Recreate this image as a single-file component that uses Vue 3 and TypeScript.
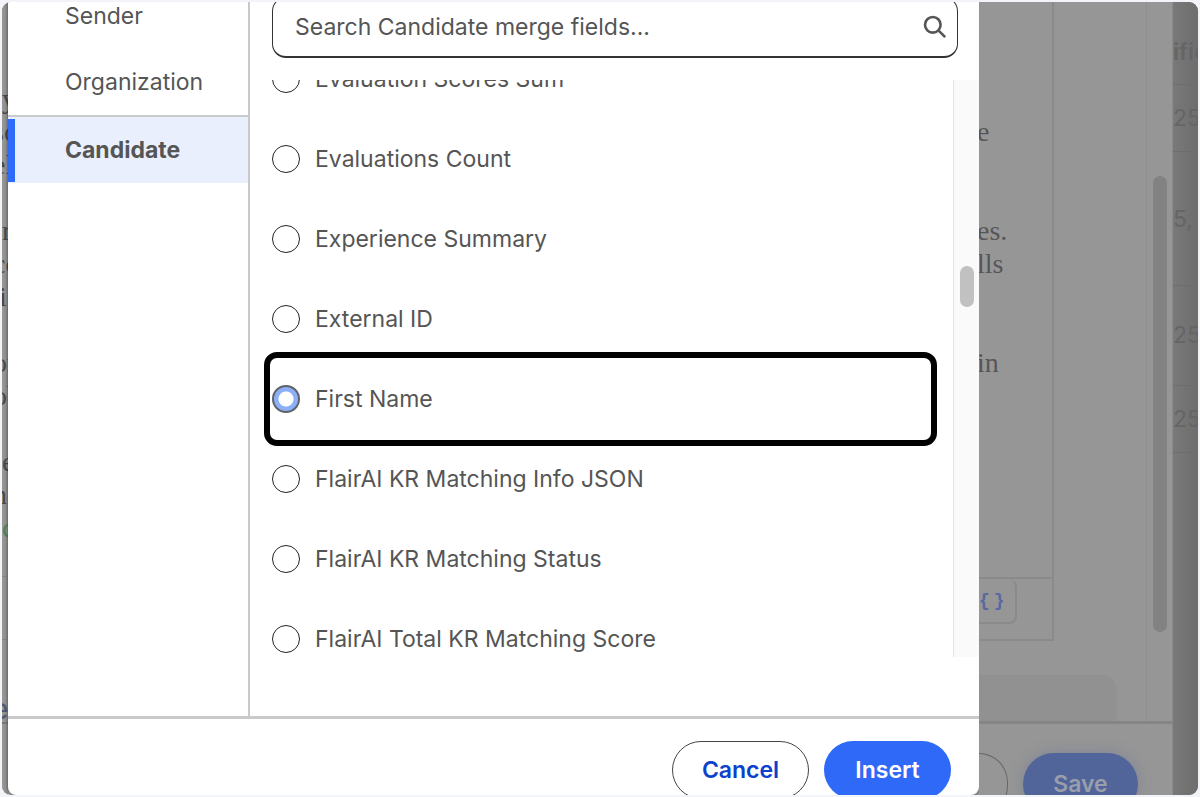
<script setup lang="ts">
import { ref } from 'vue'

const groups = ['Sender', 'Organization', 'Candidate']
const activeGroup = ref('Candidate')

const fields = [
  'Evaluation Scores Sum',
  'Evaluations Count',
  'Experience Summary',
  'External ID',
  'First Name',
  'FlairAI KR Matching Info JSON',
  'FlairAI KR Matching Status',
  'FlairAI Total KR Matching Score',
]
const selected = ref('First Name')
const query = ref('')

const leftLines = ['y', 'sc', 'el', '', 'r', 'cc', 'i,', '', 'or', 'ob', '', 'e', 'nc', 'c']
const rightLines = ['', 'e', '', '', 'es.', 'lls', '', '', 'in']
const rows = ['ific', '25,', '5,', '25,', '25,']
</script>

<template>
  <div class="page">
    <div class="frame">
      <div class="behind-left" aria-hidden="true">
        <div class="letter">
          <p
            v-for="(line, i) in leftLines"
            :key="i"
            :class="{ green: i === 13, cut: line.length > 1 && line !== 'i,', narrow: line === 'i,' }"
          >{{ line }}</p>
        </div>
        <div class="left-tools"></div>
        <div class="left-link">e</div>
      </div>

      <section class="modal" role="dialog" aria-label="Insert merge field">
        <div class="body">
          <nav class="groups">
            <button
              v-for="g in groups"
              :key="g"
              type="button"
              class="group"
              :class="{ active: g === activeGroup }"
              @click="activeGroup = g"
            >{{ g }}</button>
          </nav>
          <div class="content">
            <div class="search">
              <input v-model="query" type="text" aria-label="Search Candidate merge fields" placeholder="Search Candidate merge fields..." />
              <svg class="glass" viewBox="0 0 24 24" aria-hidden="true">
                <circle cx="9.8" cy="9.8" r="7.8" />
                <path d="M15.4 15.4L22.2 22.2" />
              </svg>
            </div>
            <div class="scroller">
              <div class="list">
                <label v-for="f in fields" :key="f" class="field" :class="{ framed: f === 'First Name' }">
                  <input v-model="selected" type="radio" name="field" :value="f" />
                  <span>{{ f }}</span>
                </label>
              </div>
              <div class="track"><div class="thumb"></div></div>
            </div>
          </div>
        </div>
        <footer class="footer">
          <button type="button" class="btn cancel">Cancel</button>
          <button type="button" class="btn insert">Insert</button>
        </footer>
      </section>

      <div class="behind-right">
        <div class="dialog">
          <div class="upper">
            <div class="main">
              <div class="editor">
                <div class="text">
                  <p v-for="(line, i) in rightLines" :key="i">{{ line }}</p>
                </div>
                <div class="tools"><button type="button" class="braces"><span>{</span><span>}</span></button></div>
              </div>
              <div class="panel"></div>
            </div>
            <div class="outer-track"><div class="outer-thumb"></div></div>
          </div>
          <div class="outer-footer">
            <span class="outer-cancel"></span>
            <button type="button" class="save">Save</button>
          </div>
        </div>
        <div class="table-edge">
          <span v-for="(r, i) in rows" :key="i" :class="'r' + i">{{ r }}</span>
        </div>
      </div>
    </div>
  </div>
</template>

<style>
body {
  background: #f3f3fa;
}
</style>

<style scoped>
* {
  box-sizing: border-box;
}
.page {
  height: 100vh;
  padding: 2px;
  background: #f3f3fa;
  font-family: Inter, "Liberation Sans", sans-serif;
  font-size: 23px;
  color: #555;
}
button,
input {
  font: inherit;
  color: inherit;
  margin: 0;
}
p {
  margin: 0;
}
.frame {
  display: flex;
  height: 100%;
  border-radius: 9px;
  overflow: hidden;
  background: #969696;
}
.behind-left {
  flex: none;
  width: 6px;
  overflow: hidden;
  background: linear-gradient(90deg, #9a9a99, #868686);
  font-family: "Liberation Serif", serif;
  font-size: 28px;
  color: #484848;
}
.letter {
  height: 575px;
  padding-top: 80px;
  border-bottom: 1px solid #858585;
}
.letter p {
  height: 33px;
  line-height: 33px;
  white-space: nowrap;
}
.letter p.cut {
  text-indent: -9px;
}
.letter p.narrow {
  text-indent: -3px;
}
.letter p.green {
  color: #4c8358;
}
.left-tools {
  height: 63px;
  border-bottom: 1px solid #858585;
}
.left-link {
  height: 84px;
  padding-top: 54px;
  line-height: 30px;
  font-family: Inter, sans-serif;
  text-indent: -10px;
  color: #4e5870;
  border-bottom: 2px solid #777;
}
.modal {
  flex: 1;
  min-width: 0;
  display: flex;
  flex-direction: column;
  background: #fff;
  border-radius: 0 0 8px 8px;
  box-shadow: 0 0 3px rgba(0, 0, 0, 0.5);
  overflow: hidden;
}
.body {
  flex: 1;
  min-height: 0;
  display: flex;
}
.groups {
  flex: none;
  width: 242px;
  border-right: 2px solid #c9c9c9;
  overflow: hidden;
  padding-top: 46px;
}
.group {
  display: block;
  width: 100%;
  height: 66px;
  padding: 0 0 0 57px;
  border: 0;
  background: #fff;
  text-align: left;
}
.group:first-child {
  margin-top: -65px;
}
.group.active {
  height: 68px;
  border-top: 2px solid #c9c9c9;
  background: linear-gradient(#2e6bf9, #2e6bf9) 0 2px / 7px 63px no-repeat, #e9effc;
  font-weight: 700;
}
.content {
  flex: 1;
  min-width: 0;
  display: flex;
  flex-direction: column;
  padding-bottom: 59px;
}
.search {
  display: flex;
  align-items: center;
  height: 61px;
  margin: -5px 21px 22px 22px;
  padding: 0 10px 0 22px;
  border: 1px solid #333;
  border-bottom-width: 2px;
  border-radius: 14px;
}
.search input {
  flex: 1;
  min-width: 0;
  padding: 0;
  border: 0;
  outline: 0;
  background: none;
}
.search input::placeholder {
  color: #555;
  opacity: 1;
}
.glass {
  width: 24px;
  height: 24px;
  fill: none;
  stroke: #555;
  stroke-width: 2.6;
}
.scroller {
  flex: 1;
  min-height: 0;
  display: flex;
  overflow: hidden;
}
.list {
  flex: 1;
  margin-top: -41px;
  padding: 0 16px 0 14px;
}
.field {
  position: relative;
  display: flex;
  align-items: center;
  gap: 15px;
  height: 80px;
  padding-left: 8px;
}
.framed::after {
  content: "";
  position: absolute;
  inset: -7px 0;
  border: 6px solid #000;
  border-radius: 13px;
}
.field input {
  appearance: none;
  flex: none;
  width: 28px;
  height: 28px;
  border: 1px solid #222;
  border-radius: 50%;
  background: #fff;
}
.field input:checked {
  border: 2px solid #5f6368;
  background: radial-gradient(circle, #fff 7px, #8cb0f8 8px);
}
.track {
  flex: none;
  width: 26px;
  padding: 186px 5px 0 6px;
  background: #fafafa;
  border-left: 1px solid #e4e4e4;
}
.thumb {
  height: 41px;
  border-radius: 7px;
  background: #c1c1c1;
}
.footer {
  flex: none;
  display: flex;
  justify-content: flex-end;
  gap: 15px;
  height: 79px;
  padding: 22px 28px 0 0;
  border-top: 3px solid #c9c9c9;
  overflow: hidden;
}
.btn {
  height: 58px;
  border-radius: 29px;
  padding: 0;
  font-weight: 600;
}
.cancel {
  width: 137px;
  border: 1px solid #444;
  background: #fff;
  color: #0b41cc;
}
.insert {
  width: 127px;
  border: 0;
  background: #2e69f8;
  color: #fff;
}
.behind-right {
  flex: none;
  width: 219px;
  display: flex;
}
.dialog {
  width: 194px;
  display: flex;
  flex-direction: column;
  border-right: 1px solid #8b8b8b;
  background: #969696;
}
.upper {
  flex: 1;
  min-height: 0;
  display: flex;
}
.main {
  flex: 1;
  display: flex;
  flex-direction: column;
}
.editor {
  width: 75px;
  height: 639px;
  display: flex;
  flex-direction: column;
  border-right: 2px solid #8a8a8a;
  border-bottom: 2px solid #8a8a8a;
}
.text {
  flex: 1;
  padding-top: 80px;
  font-family: "Liberation Serif", serif;
  font-size: 28px;
  color: #565656;
  overflow: hidden;
}
.text p {
  height: 33px;
  line-height: 33px;
  text-indent: -2px;
}
.tools {
  height: 62px;
  border-top: 2px solid #8a8a8a;
}
.braces {
  display: flex;
  align-items: center;
  gap: 4px;
  width: 38px;
  height: 45px;
  padding: 0;
  border: 1px solid #8a8a8a;
  border-width: 0 2px 2px 0;
  border-radius: 0 8px 8px 0;
  background: none;
  font-family: "Liberation Mono", monospace;
  font-weight: 700;
  font-size: 18px;
  color: #5668a0;
}
.panel {
  flex: 1;
  margin: 34px 29px 0 0;
  background: #919191;
  border-radius: 0 16px 0 0;
}
.outer-track {
  width: 26px;
  padding: 174px 5px 0 6px;
  border-left: 1px solid #8e8e8e;
}
.outer-thumb {
  height: 456px;
  border-radius: 7px;
  background: #828282;
}
.outer-footer {
  flex: none;
  height: 74px;
  display: flex;
  gap: 15px;
  padding-top: 29px;
  border-top: 3px solid #858585;
  overflow: hidden;
}
.outer-cancel {
  flex: none;
  width: 29px;
  height: 62px;
  border: 1px solid #666;
  border-left: 0;
  border-radius: 0 31px 31px 0;
}
.save {
  flex: none;
  width: 115px;
  height: 62px;
  padding: 0;
  border: 0;
  border-radius: 31px;
  background: #52659b;
  box-shadow: 0 0 14px rgba(82, 101, 155, 0.35);
  color: #989eac;
  font-weight: 600;
}
.table-edge {
  flex: 1;
  display: flex;
  flex-direction: column;
  overflow: hidden;
  background: linear-gradient(90deg, #797979, #6d6d6d);
  color: #656565;
}
.table-edge span {
  height: 67px;
  line-height: 67px;
  border-bottom: 1px solid #6d6d6d;
}
.table-edge .r0 {
  height: 83px;
  padding-top: 17px;
  font-weight: 600;
}
.table-edge .r2 {
  height: 134px;
  padding-top: 34px;
}
.table-edge .r3 {
  height: 100px;
  padding-top: 16px;
}
</style>
